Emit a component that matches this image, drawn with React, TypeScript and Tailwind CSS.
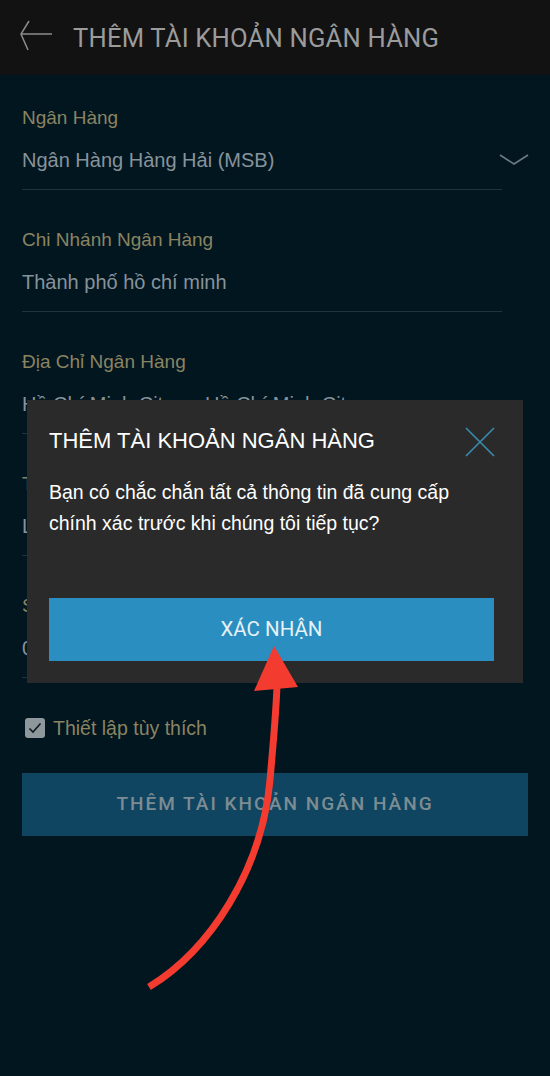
import React from "react";

const sans = { fontFamily: '"Liberation Sans", Arial, sans-serif' };
const din = { fontFamily: 'Roboto, "Liberation Sans", sans-serif' };

interface FieldProps {
  label: string;
  value: string;
  first?: boolean;
  chevron?: boolean;
}

function Field({ label, value, first, chevron }: FieldProps) {
  return (
    <div className={first ? "pt-[31px]" : "pt-[38px]"}>
      <div className="border-b border-[#1f333d] pb-[17px]">
        <div className="text-[19px] leading-[24px] text-[#8a8462]">{label}</div>
        <div className="mt-[18px] flex items-center justify-between">
          <span className="text-[20px] leading-[24px] text-[#87939a] whitespace-nowrap">{value}</span>
          {chevron && (
            <svg width="30" height="12" viewBox="0 0 30 12" className="mr-[-27px]">
              <path d="M1 1 L15 10 L29 1" fill="none" stroke="#6b7b85" strokeWidth="1.6" />
            </svg>
          )}
        </div>
      </div>
    </div>
  );
}

export default function App() {
  return (
    <div className="relative w-[550px] h-[1076px] overflow-hidden bg-[#021620]" style={sans}>
      {/* Header */}
      <div className="h-[75px] bg-[#121212] flex items-center pl-[20px]">
        <svg width="34" height="34" viewBox="0 0 34 34" className="mt-[-4px]">
          <path d="M9 2 L1 15 L8 31" fill="none" stroke="#8c8c8c" strokeWidth="1.5" />
          <path d="M1 15 L32 15" fill="none" stroke="#8c8c8c" strokeWidth="1.5" />
        </svg>
        <h1 className="ml-[19px] mt-[3px] text-[25.6px] leading-none text-[#9b9b9b] tracking-[0.2px]" style={din}>
          THÊM TÀI KHOẢN NGÂN HÀNG
        </h1>
      </div>

      {/* Form */}
      <div className="pl-[22px] pr-[48px]">
        <Field first label="Ngân Hàng" value="Ngân Hàng Hàng Hải (MSB)" chevron />
        <Field label="Chi Nhánh Ngân Hàng" value="Thành phố hồ chí minh" />
        <Field label="Địa Chỉ Ngân Hàng" value="Hồ Chí Minh City, ... Hồ Chí Minh City" />
        <Field label="Tên Chủ Tài Khoản" value="LE VAN AN" />
        <Field label="Số Tài Khoản" value="0123456789" />
      </div>

      <div className="px-[22px] mt-[38px] flex items-center">
        <div className="ml-[3px] w-[20px] h-[20px] rounded-[3px] bg-[#8e979c] flex items-center justify-center">
          <svg width="14" height="12" viewBox="0 0 14 12">
            <path d="M1.5 6.5 L5 10 L12.5 1.5" fill="none" stroke="#0d1a20" strokeWidth="1.6" />
          </svg>
        </div>
        <span className="ml-[8px] text-[19.5px] leading-[24px] text-[#8a8462]">Thiết lập tùy thích</span>
      </div>

      <div className="px-[22px] mt-[33px]">
        <div
          className="h-[63px] bg-[#0f4560] flex items-center justify-center text-[19px] font-medium tracking-[2px] text-[#7d8c93]"
          style={din}
        >
          THÊM TÀI KHOẢN NGÂN HÀNG
        </div>
      </div>

      {/* Confirm dialog */}
      <div className="absolute left-[27px] top-[400px] w-[496px] h-[283px] bg-[#2a2a2a] pl-[22px] pr-[27px]">
        <div className="flex items-start justify-between pt-[27px]">
          <h2 className="text-[22px] leading-[28px] text-white">THÊM TÀI KHOẢN NGÂN HÀNG</h2>
          <svg width="32" height="32" viewBox="0 0 32 32" className="mt-[-1px]">
            <path d="M2 2 L30 30 M30 2 L2 30" fill="none" stroke="#3b8cae" strokeWidth="1.6" />
          </svg>
        </div>
        <p className="mt-[19px] text-[19.5px] leading-[31px] text-white">
          Bạn có chắc chắn tất cả thông tin đã cung cấp
          <br />
          chính xác trước khi chúng tôi tiếp tục?
        </p>
        <div
          className="mt-[59px] w-[445px] h-[63px] bg-[#2a8ec0] flex items-center justify-center text-[20.5px] text-[#e6f1f6]"
          style={din}
        >
          XÁC NHẬN
        </div>
      </div>

      {/* Red annotation arrow */}
      <svg className="absolute left-0 top-0" width="550" height="1076" viewBox="0 0 550 1076">
        <path
          d="M149 987 C 210 950, 262 870, 270 780 C 273 745, 276 715, 277 685"
          fill="none"
          stroke="#f33b30"
          strokeWidth="7"
        />
        <path d="M274 646 L254 691 L298 687 Z" fill="#f33b30" />
      </svg>
    </div>
  );
}
